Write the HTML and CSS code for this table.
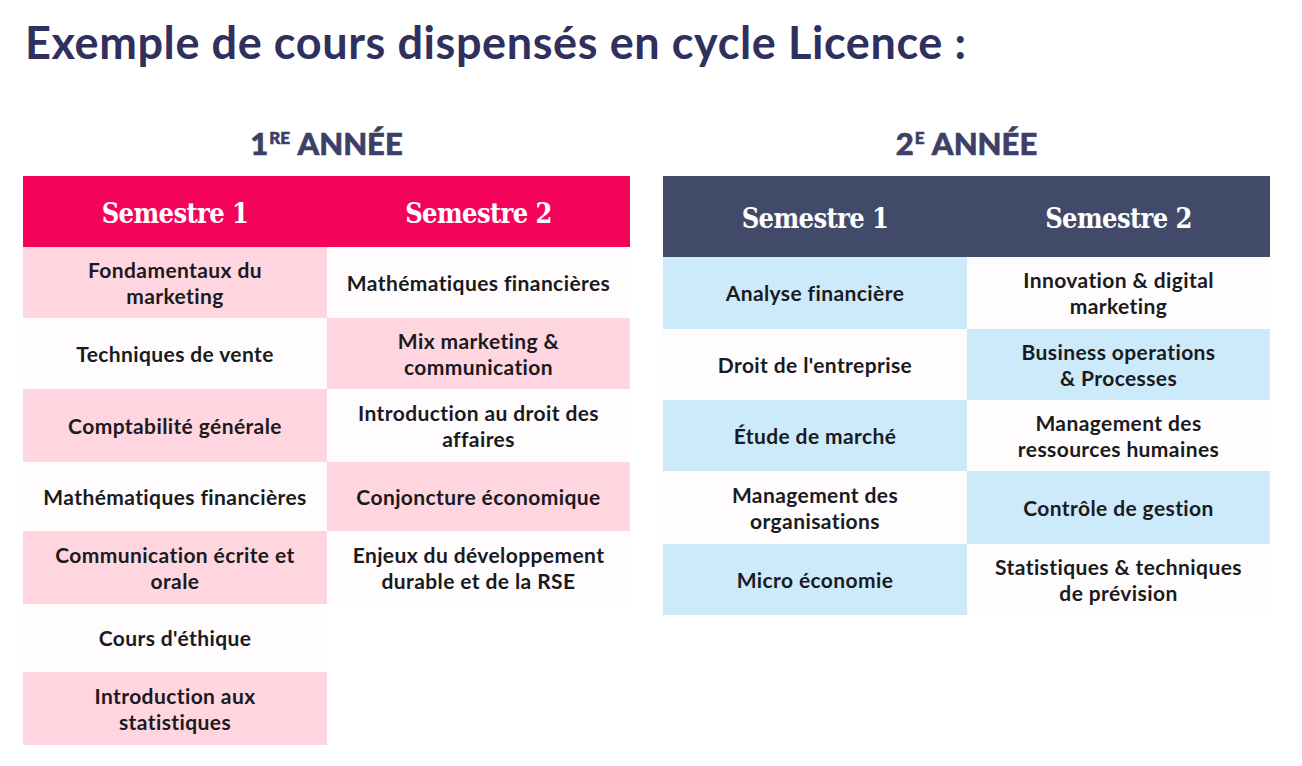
FILE: index.html
```html
<!DOCTYPE html>
<html lang="fr">
<head>
<meta charset="utf-8">
<title>Exemple de cours dispensés en cycle Licence</title>
<link rel="stylesheet" href="styles.css">
</head>
<body>
<h1 class="title">Exemple de cours dispensés en cycle Licence :</h1>
<main class="years">
  <section class="year">
    <h2 class="year-title">1<sup>RE</sup> ANNÉE</h2>
    <div class="table table-first">
      <div class="head head-pink">
        <div class="head-cell">Semestre 1</div>
        <div class="head-cell">Semestre 2</div>
      </div>
      <div class="body body-first">
        <div class="cell pink">Fondamentaux du<br>marketing</div>
        <div class="cell white">Mathématiques financières</div>
        <div class="cell white">Techniques de vente</div>
        <div class="cell pink">Mix marketing &amp;<br>communication</div>
        <div class="cell pink">Comptabilité générale</div>
        <div class="cell white">Introduction au droit des<br>affaires</div>
        <div class="cell white">Mathématiques financières</div>
        <div class="cell pink">Conjoncture économique</div>
        <div class="cell pink">Communication écrite et<br>orale</div>
        <div class="cell white">Enjeux du développement<br>durable et de la RSE</div>
        <div class="cell white">Cours d'éthique</div>
        <div class="cell empty"></div>
        <div class="cell pink">Introduction aux<br>statistiques</div>
        <div class="cell empty"></div>
      </div>
    </div>
  </section>
  <section class="year">
    <h2 class="year-title">2<sup>E</sup> ANNÉE</h2>
    <div class="table table-second">
      <div class="head head-navy">
        <div class="head-cell">Semestre 1</div>
        <div class="head-cell">Semestre 2</div>
      </div>
      <div class="body body-second">
        <div class="cell blue">Analyse financière</div>
        <div class="cell white">Innovation &amp; digital<br>marketing</div>
        <div class="cell white">Droit de l'entreprise</div>
        <div class="cell blue">Business operations<br>&amp; Processes</div>
        <div class="cell blue">Étude de marché</div>
        <div class="cell white">Management des<br>ressources humaines</div>
        <div class="cell white">Management des<br>organisations</div>
        <div class="cell blue">Contrôle de gestion</div>
        <div class="cell blue">Micro économie</div>
        <div class="cell white">Statistiques &amp; techniques<br>de prévision</div>
      </div>
    </div>
  </section>
</main>
</body>
</html>
```
FILE: styles.css
```css
html, body {
  margin: 0;
  padding: 0;
  background: #ffffff;
}

body {
  font-family: "Lato", "Open Sans", "Liberation Sans", sans-serif;
  color: #1a1a1f;
}

.title {
  margin: 0;
  padding: 15px 0 0 25px;
  font-family: "Lato", "Open Sans", sans-serif;
  font-weight: 700;
  font-size: 45px;
  line-height: 54px;
  color: #2f305d;
  letter-spacing: 0.6px;
}

.years {
  display: grid;
  grid-template-columns: 607px 607px;
  column-gap: 33px;
  padding: 0 0 0 23px;
  margin-top: 53px;
}

.year {
  display: flex;
  flex-direction: column;
}

.year-title {
  margin: 0;
  height: 54px;
  text-align: center;
  font-family: "Lato", sans-serif;
  font-weight: 900;
  font-size: 31px;
  line-height: 36px;
  color: #3e3f66;
  padding-top: 3px;
  box-sizing: border-box;
  -webkit-text-stroke: 0.6px #3e3f66;
}

.year-title sup {
  font-size: 17px;
  vertical-align: 0;
  position: relative;
  top: -11px;
  margin-left: 1px;
  margin-right: 1px;
}

.head {
  display: grid;
  grid-template-columns: 304px 303px;
  color: #ffffff;
}

.head-pink {
  background: #f3045a;
  height: 71px;
}

.head-navy {
  background: #424a6a;
  height: 81px;
}

.head-cell {
  display: flex;
  align-items: center;
  justify-content: center;
  font-family: "DejaVu Serif", "Liberation Serif", serif;
  font-stretch: condensed;
  font-weight: 700;
  font-size: 27px;
  letter-spacing: -0.6px;
  padding-top: 3px;
}

.body {
  display: grid;
  grid-template-columns: 304px 303px;
}

.body-first {
  grid-template-rows: 71px 71px 73px 69px 73px 68px 73px;
}

.body-second {
  grid-template-rows: 72px 71px 71px 73px 71px;
}

.cell {
  display: flex;
  align-items: center;
  justify-content: center;
  text-align: center;
  font-weight: 700;
  font-size: 21px;
  line-height: 26px;
  letter-spacing: 0.4px;
  color: #1a1a1f;
  padding: 0 6px;
}

.pink {
  background: #ffd6df;
}

.blue {
  background: #cceaf9;
}

.white {
  background: #fefcfc;
}

.empty {
  background: transparent;
}
```
